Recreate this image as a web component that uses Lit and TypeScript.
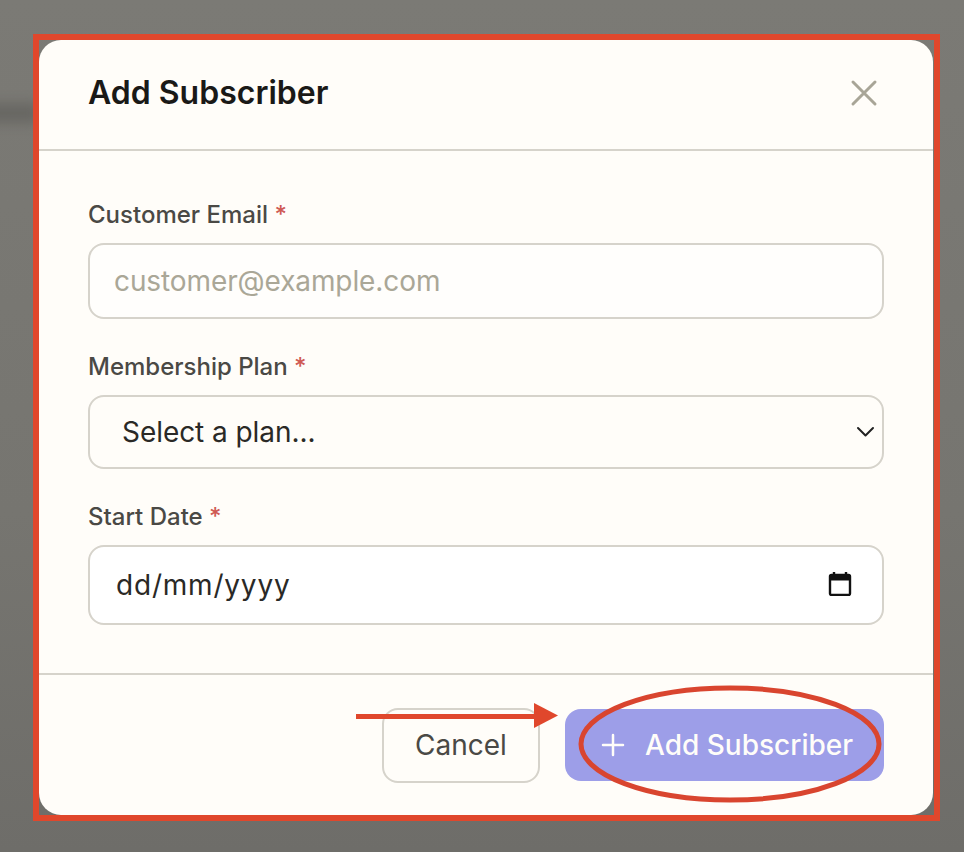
import { LitElement, html, css, svg } from "lit";
import { customElement } from "lit/decorators.js";

@customElement("app-root")
export class AppRoot extends LitElement {
  static styles = css`
    :host {
      display: block;
      position: relative;
      width: 964px;
      height: 852px;
      overflow: hidden;
      box-sizing: border-box;
      padding: 40px 31px 0 39px;
      background: linear-gradient(180deg, #7b7a75 0%, #767570 60%, #6e6d69 100%);
      font-family: Inter, "Liberation Sans", sans-serif;
    }
    .smudge {
      position: absolute;
      left: -20px;
      top: 104px;
      width: 60px;
      height: 18px;
      background: #5f5e5a;
      filter: blur(7px);
      opacity: 0.75;
    }
    .modal {
      position: relative;
      height: 775px;
      background: #fffdf9;
      border-radius: 22px;
      display: flex;
      flex-direction: column;
    }
    .head {
      height: 109px;
      box-sizing: content-box;
      flex: none;
      border-bottom: 2px solid #d6d3cb;
      padding: 0 56px 0 49px;
      display: flex;
      align-items: center;
      justify-content: space-between;
    }
    .head > * {
      position: relative;
      top: -2px;
    }
    h2 {
      margin: 0;
      font-size: 32px;
      line-height: 40px;
      font-weight: 600;
      color: #1a1917;
    }
    .close {
      display: block;
      width: 28px;
      height: 28px;
      margin-right: -1px;
      color: #a8a597;
    }
    .body {
      flex: 1;
      padding: 46px 49px 0;
      display: flex;
      flex-direction: column;
      gap: 30px;
    }
    .field {
      display: flex;
      flex-direction: column;
      gap: 10px;
    }
    label {
      font-size: 24px;
      line-height: 36px;
      font-weight: 450;
      color: #4a4945;
    }
    .req {
      color: #cf5a54;
    }
    .control {
      box-sizing: border-box;
      width: 100%;
      border: 2px solid #d6d3cb;
      border-radius: 16px;
      display: flex;
      align-items: center;
      justify-content: space-between;
      font-size: 28px;
      color: #2a2926;
    }
    .email {
      height: 76px;
      padding: 0 24px;
      background: #fffefc;
    }
    .email input {
      flex: 1;
      min-width: 0;
      border: 0;
      padding: 0;
      outline: 0;
      background: transparent;
      font: inherit;
      color: inherit;
      letter-spacing: -0.1px;
    }
    .email input::placeholder {
      color: #aaa797;
      opacity: 1;
    }
    .select {
      height: 74px;
      padding: 0 7px 0 32px;
      letter-spacing: -0.06px;
    }
    .date {
      height: 80px;
      padding: 0 30px 0 26px;
      background: #ffffff;
      letter-spacing: 0.8px;
    }
    .chev {
      display: block;
      width: 20px;
      height: 12px;
    }
    .cal {
      display: block;
      width: 24px;
      height: 24px;
      margin-bottom: 3px;
    }
    .foot {
      flex: none;
      height: 142px;
      box-sizing: border-box;
      border-top: 2px solid #d6d3cb;
      padding: 0 49px 0 0;
      display: flex;
      align-items: center;
      justify-content: flex-end;
      gap: 25px;
    }
    button {
      font: inherit;
      font-size: 28px;
      font-weight: 400;
      box-sizing: border-box;
      border-radius: 16px;
      cursor: pointer;
      display: flex;
      align-items: center;
    }
    .cancel {
      width: 158px;
      height: 75px;
      justify-content: center;
      background: transparent;
      border: 2px solid #d6d3cb;
      color: #4a4945;
    }
    .add {
      width: 319px;
      height: 72px;
      padding: 0 0 0 36px;
      gap: 20px;
      border: 0;
      background: #9d9ee8;
      color: #fffdf9;
      font-weight: 450;
    }
    .plus {
      display: block;
      width: 24px;
      height: 24px;
      flex: none;
    }
    .overlay {
      position: absolute;
      left: 0;
      top: 0;
      width: 964px;
      height: 852px;
      pointer-events: none;
    }
  `;

  private overlay() {
    return svg`
      <rect x="36" y="37" width="901" height="781" fill="none" stroke="#e0472c" stroke-width="6"/>
      <ellipse cx="730" cy="744" rx="149" ry="56" fill="none" stroke="#d9452f" stroke-width="5"/>
      <rect x="356" y="714" width="180" height="5" fill="#e0472c"/>
      <polygon points="534,703 558,715.5 534,728" fill="#e0472c"/>
    `;
  }

  render() {
    return html`
      <div class="smudge"></div>
      <div class="modal">
        <div class="head">
          <h2>Add Subscriber</h2>
          <svg class="close" viewBox="0 0 28 28" fill="none" stroke="currentColor" stroke-width="3" stroke-linecap="round">
            <path d="M3 3 L25 25 M25 3 L3 25"/>
          </svg>
        </div>
        <div class="body">
          <div class="field">
            <label>Customer Email <span class="req">*</span></label>
            <div class="control email"><input type="email" placeholder="customer@example.com" /></div>
          </div>
          <div class="field">
            <label>Membership Plan <span class="req">*</span></label>
            <div class="control select">
              <span>Select a plan...</span>
              <svg class="chev" viewBox="0 0 20 12" fill="none" stroke="#222" stroke-width="2" stroke-linecap="round" stroke-linejoin="round">
                <path d="M3 2 L10.5 9.5 L18 2"/>
              </svg>
            </div>
          </div>
          <div class="field">
            <label>Start Date <span class="req">*</span></label>
            <div class="control date">
              <span>dd/mm/yyyy</span>
              <svg class="cal" viewBox="0 0 24 24" fill="none">
                <path d="M6 0v4M18 0v4" stroke="#111" stroke-width="2.4"/>
                <rect x="2" y="3" width="20" height="20" rx="1.5" stroke="#111" stroke-width="2.4"/>
                <rect x="2" y="3" width="20" height="5.5" fill="#111"/>
              </svg>
            </div>
          </div>
        </div>
        <div class="foot">
          <button class="cancel">Cancel</button>
          <button class="add">
            <svg class="plus" viewBox="0 0 24 24" fill="none" stroke="currentColor" stroke-width="2.5" stroke-linecap="round">
              <path d="M12 2v20M2 12h20"/>
            </svg>
            Add Subscriber
          </button>
        </div>
      </div>
      <svg class="overlay" viewBox="0 0 964 852">${this.overlay()}</svg>
    `;
  }
}
